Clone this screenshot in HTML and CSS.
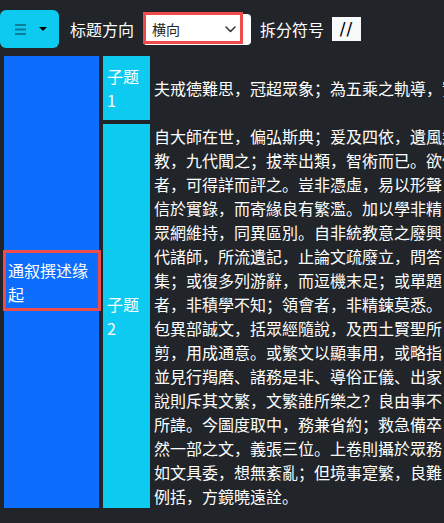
FILE: index.html
```html
<!DOCTYPE html>
<html lang="zh">
<head>
<meta charset="utf-8">
<title>拆分</title>
<link rel="stylesheet" href="styles.css">
</head>
<body>
<div class="toolbar">
  <button class="menu-btn" type="button">
    <svg class="menu-icon" width="11" height="11" viewBox="0 0 11 11"><rect x="0" y="0" width="11" height="2"/><rect x="0" y="4.5" width="11" height="2"/><rect x="0" y="9" width="11" height="2"/></svg>
    <span class="caret"></span>
  </button>
  <span class="label">标题方向</span>
  <span class="select">
    <span class="select-text">横向</span>
    <svg class="chevron" width="11" height="7" viewBox="0 0 11 7"><path d="M1 1 L5.5 5.5 L10 1" fill="none" stroke="#343a40" stroke-width="1.6" stroke-linecap="round" stroke-linejoin="round"/></svg>
  </span>
  <span class="label label-last">拆分符号</span>
  <span class="sep">//</span>
</div>
<table class="grid">
  <tr>
    <td class="title" rowspan="2"><div class="title-text">通叙撰述缘起</div></td>
    <td class="sub"><div class="sub-text">子题 1</div></td>
    <td class="content">夫戒德難思，冠超眾象；為五乘之軌導，實三寶之舟航。</td>
  </tr>
  <tr>
    <td class="sub"><div class="sub-text">子题 2</div></td>
    <td class="content">
      <div>自大師在世，偏弘斯典；爰及四依，遺風無墜。</div>
      <div>教，九代聞之；拔萃出類，智術而已。欲使</div>
      <div>者，可得詳而評之。豈非憑虛，易以形聲</div>
      <div>信於實錄，而寄緣良有繁濫。加以學非精</div>
      <div>眾網維持，同異區別。自非統教意之廢興</div>
      <div>代諸師，所流遺記，止論文疏廢立，問答</div>
      <div>集；或復多列游辭，而逗機末足；或單題</div>
      <div>者，非積學不知；領會者，非精鍊莫悉。</div>
      <div>包異部誠文，括眾經隨說，及西土賢聖所</div>
      <div>剪，用成通意。或繁文以顯事用，或略指</div>
      <div>並見行羯磨、諸務是非、導俗正儀、出家</div>
      <div>說則斥其文繁，文繁誰所樂之？良由事不</div>
      <div>所諱。今圖度取中，務兼省約；救急備卒</div>
      <div>然一部之文，義張三位。上卷則攝於眾務</div>
      <div>如文具委，想無紊亂；但境事寔繁，良難</div>
      <div>例括，方鏡曉遠詮。</div>
    </td>
  </tr>
</table>
</body>
</html>
```

FILE: styles.css
```css
html, body {
  margin: 0;
  padding: 0;
  background: #212529;
  color: #ffffff;
  font-family: "Noto Sans CJK SC", "Noto Sans", sans-serif;
  font-size: 16px;
  line-height: 24px;
  overflow: hidden;
}

.toolbar {
  display: flex;
  align-items: center;
  height: 38px;
  padding-top: 10px;
  margin-bottom: 4px;
}

.menu-btn {
  display: flex;
  align-items: center;
  box-sizing: border-box;
  width: 59px;
  height: 38px;
  padding: 0 0 0 15px;
  margin: 0 11px 0 0;
  border: 0;
  border-radius: 6px;
  background: #0dcaf0;
}

.menu-icon {
  display: block;
  fill: #0a7d9a;
}

.caret {
  display: block;
  width: 0;
  height: 0;
  margin-left: 13px;
  border-top: 4px solid #000;
  border-left: 4px solid transparent;
  border-right: 4px solid transparent;
}

.label {
  margin-right: 9px;
  white-space: nowrap;
}

.label-last {
  margin-right: 8px;
}

.select {
  position: relative;
  display: flex;
  align-items: center;
  box-sizing: border-box;
  width: 108px;
  height: 31px;
  padding-left: 9px;
  margin-right: 9px;
  background: #ffffff;
  border-radius: 4px;
  color: #212529;
  font-size: 14px;
  line-height: 21px;
}

.select::after {
  content: "";
  position: absolute;
  left: 0;
  top: -1.5px;
  width: 100px;
  height: 32px;
  box-sizing: border-box;
  border: 3px solid #f04b4b;
}

.chevron {
  display: block;
  margin-left: auto;
  margin-right: 15px;
}

.sep {
  display: block;
  width: 29px;
  height: 24px;
  background: #f8f9fa;
  color: #000;
  font-family: "DejaVu Sans", sans-serif;
  font-size: 17px;
  line-height: 24px;
  text-align: center;
  letter-spacing: 1px;
}

.grid {
  width: max-content;
  border-collapse: separate;
  border-spacing: 4px;
}

.grid td {
  padding: 0;
  vertical-align: middle;
}

.grid td.title {
  padding: 0 4px;
  background: #0d6efd;
}

.title-text {
  position: relative;
  width: 87px;
}

.title-text::after {
  content: "";
  position: absolute;
  left: -5px;
  top: -8px;
  width: 98px;
  height: 61px;
  box-sizing: border-box;
  border: 3px solid #f04b4b;
}

.grid td.sub {
  padding: 8px 4px;
  background: #0dcaf0;
}

.sub-text {
  width: 39px;
}

.grid td.content {
  white-space: nowrap;
}
```
